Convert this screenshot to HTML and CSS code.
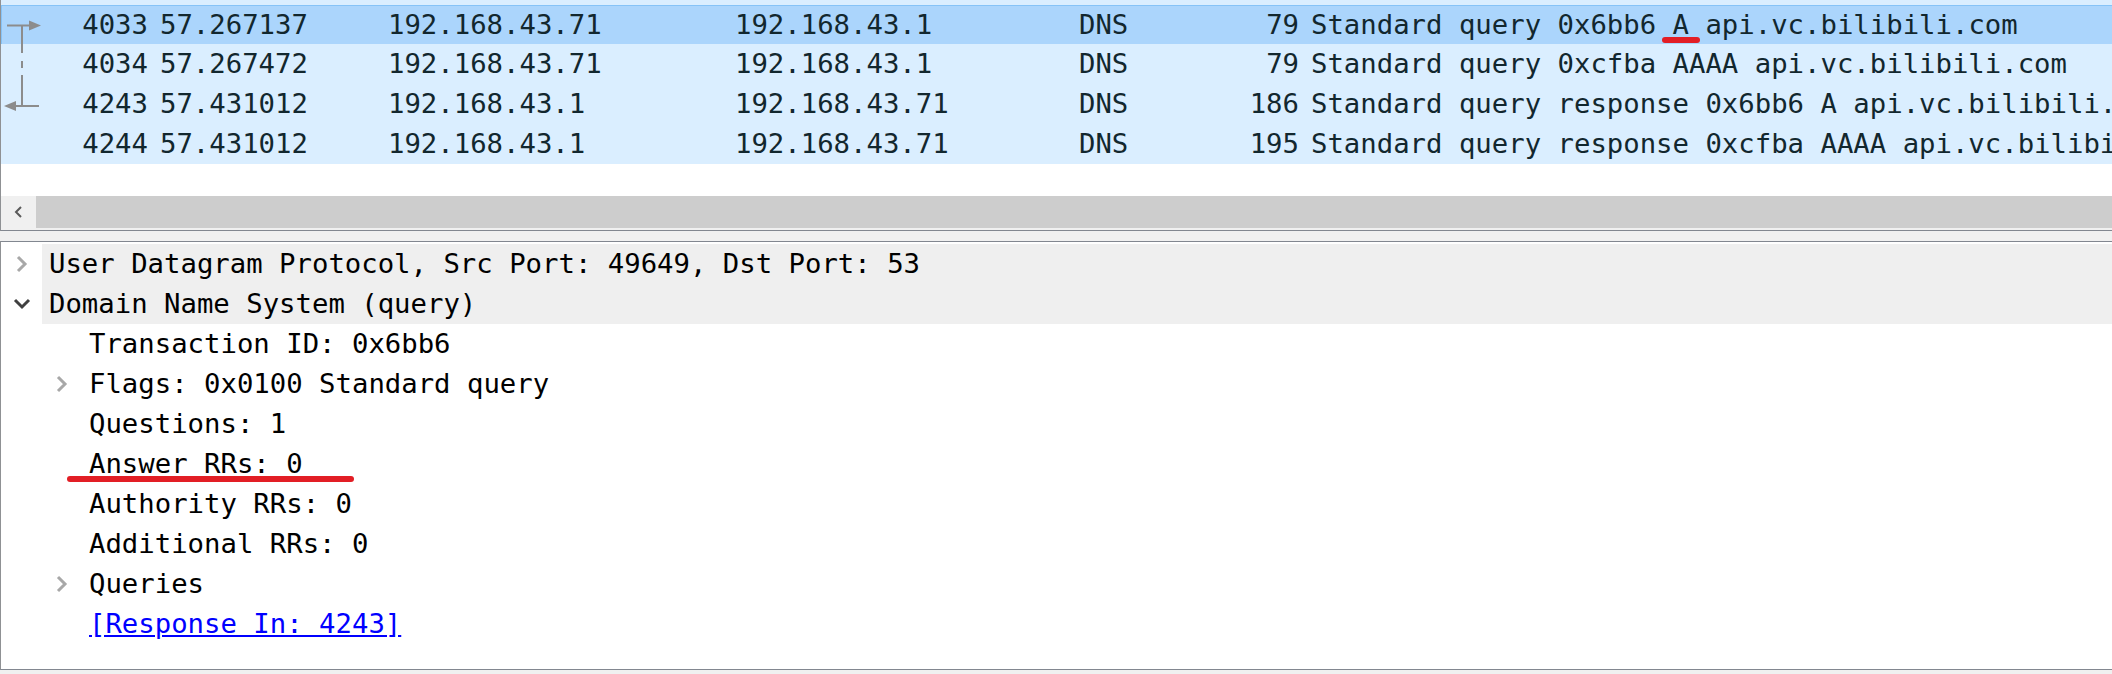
FILE: index.html
```html
<!DOCTYPE html>
<html lang="en">
<head>
<meta charset="utf-8">
<title>Wireshark</title>
<link rel="stylesheet" href="styles.css">
</head>
<body>
<div class="app">
  <section class="plist">
    <div class="prow partial"></div>
    <div class="prow sel">
      <div class="c no"><svg class="rel" width="42" height="38" viewBox="0 0 42 38"><line x1="5" y1="19.5" x2="30" y2="19.5" stroke="#8c8c8c" stroke-width="2"/><polygon points="27,14.5 39,19.5 27,24.5" fill="#8c8c8c"/><line x1="20" y1="19.5" x2="20" y2="38" stroke="#8c8c8c" stroke-width="2"/></svg><span>4033</span></div>
      <div class="c">57.267137</div>
      <div class="c">192.168.43.71</div>
      <div class="c">192.168.43.1</div>
      <div class="c">DNS</div>
      <div class="c len">79</div>
      <div class="c">Standard query 0x6bb6 <span class="mark-a">A</span> api.vc.bilibili.com</div>
    </div>
    <div class="prow">
      <div class="c no"><svg class="rel" width="42" height="40" viewBox="0 0 42 40"><line x1="21" y1="0" x2="21" y2="9" stroke="#8c8c8c" stroke-width="2"/><line x1="21" y1="17" x2="21" y2="24" stroke="#8c8c8c" stroke-width="2"/><line x1="21" y1="31" x2="21" y2="40" stroke="#8c8c8c" stroke-width="2"/></svg><span>4034</span></div>
      <div class="c">57.267472</div>
      <div class="c">192.168.43.71</div>
      <div class="c">192.168.43.1</div>
      <div class="c">DNS</div>
      <div class="c len">79</div>
      <div class="c">Standard query 0xcfba AAAA api.vc.bilibili.com</div>
    </div>
    <div class="prow">
      <div class="c no"><svg class="rel" width="42" height="40" viewBox="0 0 42 40"><line x1="21" y1="0" x2="21" y2="22" stroke="#8c8c8c" stroke-width="2"/><line x1="14" y1="22" x2="38" y2="22" stroke="#8c8c8c" stroke-width="2"/><polygon points="3,22 15,17 15,27" fill="#8c8c8c"/></svg><span>4243</span></div>
      <div class="c">57.431012</div>
      <div class="c">192.168.43.1</div>
      <div class="c">192.168.43.71</div>
      <div class="c">DNS</div>
      <div class="c len">186</div>
      <div class="c">Standard query response 0x6bb6 A api.vc.bilibili.com CNAME api.vc.bilibili.com.w.cdngslb.com</div>
    </div>
    <div class="prow">
      <div class="c no"><span>4244</span></div>
      <div class="c">57.431012</div>
      <div class="c">192.168.43.1</div>
      <div class="c">192.168.43.71</div>
      <div class="c">DNS</div>
      <div class="c len">195</div>
      <div class="c">Standard query response 0xcfba AAAA api.vc.bilibili.com CNAME api.vc.bilibili.com.w.cdngslb.com</div>
    </div>
    <div class="pfill"></div>
    <div class="hscroll">
      <div class="sbtn"><svg width="12" height="14" viewBox="0 0 12 14"><polyline points="8,2 3,7 8,12" fill="none" stroke="#5a5a5a" stroke-width="2"/></svg></div>
      <div class="sthumb"></div>
    </div>
  </section>

  <section class="tree">
    <div class="trow top">
      <div class="exp"><svg width="14" height="18" viewBox="0 0 14 18"><polyline points="3,2 10,9 3,16" fill="none" stroke="#a8a8a8" stroke-width="3"/></svg></div>
      <div class="lbl">User Datagram Protocol, Src Port: 49649, Dst Port: 53</div>
    </div>
    <div class="trow top">
      <div class="exp"><svg width="18" height="12" viewBox="0 0 18 12"><polyline points="2,2 9,9 16,2" fill="none" stroke="#404040" stroke-width="3"/></svg></div>
      <div class="lbl">Domain Name System (query)</div>
    </div>
    <div class="trow child">
      <div class="exp"></div>
      <div class="lbl">Transaction ID: 0x6bb6</div>
    </div>
    <div class="trow child">
      <div class="exp"><svg width="14" height="18" viewBox="0 0 14 18"><polyline points="3,2 10,9 3,16" fill="none" stroke="#a8a8a8" stroke-width="3"/></svg></div>
      <div class="lbl">Flags: 0x0100 Standard query</div>
    </div>
    <div class="trow child">
      <div class="exp"></div>
      <div class="lbl">Questions: 1</div>
    </div>
    <div class="trow child answer">
      <div class="exp"></div>
      <div class="lbl">Answer RRs: 0</div>
    </div>
    <div class="trow child">
      <div class="exp"></div>
      <div class="lbl">Authority RRs: 0</div>
    </div>
    <div class="trow child">
      <div class="exp"></div>
      <div class="lbl">Additional RRs: 0</div>
    </div>
    <div class="trow child">
      <div class="exp"><svg width="14" height="18" viewBox="0 0 14 18"><polyline points="3,2 10,9 3,16" fill="none" stroke="#a8a8a8" stroke-width="3"/></svg></div>
      <div class="lbl">Queries</div>
    </div>
    <div class="trow child">
      <div class="exp"></div>
      <div class="lbl"><a class="link" href="#">[Response In: 4243]</a></div>
    </div>
  </section>
</div>
</body>
</html>
```
FILE: styles.css
```css
* { box-sizing: border-box; }
html, body { margin: 0; padding: 0; }
body {
  width: 2112px;
  height: 674px;
  overflow: hidden;
  background: #f0f0f0;
  font-family: "DejaVu Sans Mono", "Liberation Mono", monospace;
  font-size: 27.3px;
}
.app { display: flex; flex-direction: column; width: 2112px; }

/* packet list */
.plist {
  height: 231px;
  background: #ffffff;
  border-left: 1px solid #8f9194;
  border-bottom: 1px solid #828790;
  display: flex;
  flex-direction: column;
  overflow: hidden;
}
.prow {
  flex: none;
  height: 40px;
  line-height: 40px;
  display: grid;
  grid-template-columns: 159px 228px 347px 344px 121px 111px 1fr;
  background: #daeeff;
  color: #12272e;
  white-space: nowrap;
}
.partial { height: 5px; }
.sel {
  height: 39px;
  line-height: 38px;
  background: #abd5fc;
  border-top: 1px solid #86c3f7;
  border-left: 1px solid #86c3f7;
  grid-template-columns: 158px 228px 347px 344px 121px 111px 1fr;
}
.c { overflow: hidden; }
.c:last-child { overflow: visible; }
.no { display: flex; align-items: center; padding-right: 12px; }
.no span { margin-left: auto; }
.rel { flex: none; display: block; }
.len { text-align: right; padding-right: 12px; }
.mark-a { position: relative; }
.mark-a::after {
  content: "";
  position: absolute;
  left: -11px;
  right: -11px;
  top: 28px;
  height: 6px;
  border-radius: 3px;
  background: #e21e25;
}
.pfill { flex: 1; }
.hscroll {
  flex: none;
  height: 34px;
  display: flex;
  border-bottom: 2px solid #f0f0f0;
}
.sbtn {
  width: 35px;
  background: #f0f0f0;
  display: flex;
  align-items: center;
  justify-content: center;
}
.sthumb { flex: 1; background: #cdcdcd; }

/* details tree */
.tree {
  margin-top: 10px;
  height: 429px;
  background: #ffffff;
  border-top: 1px solid #828790;
  border-left: 1px solid #8f9194;
  border-bottom: 1px solid #828790;
  padding-top: 2px;
  color: #000000;
}
.trow {
  display: flex;
  height: 40px;
  line-height: 40px;
  white-space: nowrap;
}
.exp {
  flex: none;
  width: 41px;
  display: flex;
  align-items: center;
  justify-content: center;
}
.exp svg { display: block; }
.lbl { padding-left: 7px; }
.top .lbl { flex: 1; background: #efefef; }
.child { padding-left: 40px; }
.answer { position: relative; }
.answer::after {
  content: "";
  position: absolute;
  left: 66px;
  width: 287px;
  top: 32px;
  height: 6px;
  border-radius: 3px;
  background: #e21e25;
}
.link { color: #0000ff; text-decoration: underline; }
```
